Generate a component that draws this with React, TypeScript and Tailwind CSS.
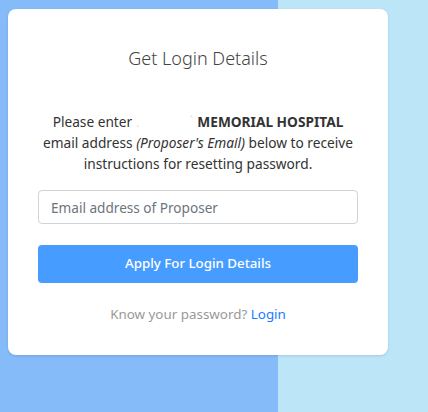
export default function App() {
  return (
    <div
      className="relative w-[428px] h-[412px] flex overflow-hidden"
      style={{ fontFamily: '"Noto Sans", "Open Sans", sans-serif' }}
    >
      <div className="w-[278px] h-full bg-[#86bbfa]" />
      <div className="flex-1 h-full bg-[#bde5f8]" />
      <div className="absolute left-[8px] top-[9px] w-[380px] h-[346px] bg-white rounded-[8px] shadow-[0_1px_3px_rgba(0,0,0,0.12)] px-[30px] pt-[37px] flex flex-col">
        <h2 className="text-center text-[18px] leading-[24px] font-light text-[#444]">
          Get Login Details
        </h2>
        <p className="mt-[41px] text-center text-[13.7px] leading-[21px] text-[#333]">
          Please enter{" "}
          <span className="inline-block w-[58px] text-left text-[#e4e4e4]">
            <span>.</span>
            <span className="ml-[50px]">`</span>
          </span>{" "}
          <b className="font-bold text-[#333]">MEMORIAL HOSPITAL</b>
          <br />
          email address <i>(Proposer's Email)</i> below to receive
          <br />
          instructions for resetting password.
        </p>
        <input
          className="mt-[16px] h-[34px] w-full border border-[#ced4da] rounded-[4px] px-[12px] text-[13.6px] text-[#495057] placeholder:text-[#6c757d] outline-none"
          placeholder="Email address of Proposer"
        />
        <button className="mt-[21px] h-[38px] w-full bg-[#479dff] rounded-[4px] text-white text-[13.3px] font-medium">
          Apply For Login Details
        </button>
        <div className="mt-[21px] text-center text-[13.4px] leading-[20px] text-[#999]">
          Know your password? <span className="text-[#1a7cff]">Login</span>
        </div>
      </div>
    </div>
  );
}
